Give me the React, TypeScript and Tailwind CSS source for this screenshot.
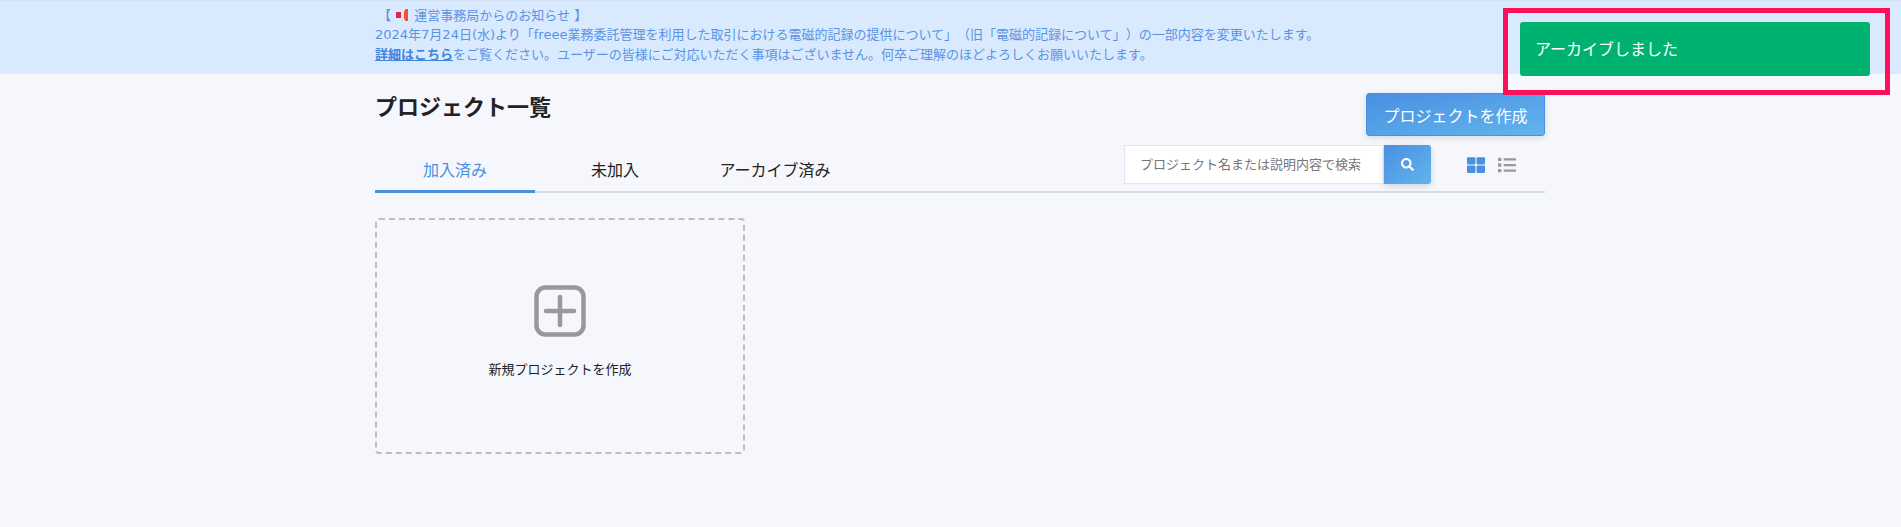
import React from 'react';
import { FaSearch, FaThLarge, FaList } from 'react-icons/fa';

const Megaphone = () => (
  <svg width="15" height="14" viewBox="0 0 15 14" className="inline-block align-[-2px]">
    <rect x="1" y="4" width="5" height="6" fill="#d8284f" />
    <rect x="6" y="4" width="3" height="6" fill="#e4e2e8" />
    <path d="M9 3.5 L10.5 1 L13 1 L13 13 L10.5 13 L9 10.5 Z" fill="#e8553f" />
    <rect x="6" y="10" width="2" height="3" fill="#d9d9de" />
  </svg>
);

const PlusSquare = () => (
  <svg width="52" height="52" viewBox="0 0 52 52" fill="none" stroke="#97999c" strokeWidth="4.5" strokeLinecap="round">
    <rect x="2.5" y="2.5" width="47" height="47" rx="9" />
    <path d="M26 12 V40" />
    <path d="M12 26 H40" />
  </svg>
);

export default function App() {
  const tabs = ['加入済み', '未加入', 'アーカイブ済み'];

  return (
    <div className="relative min-h-[527px] bg-[#f5f7fc] text-[#222] font-['Noto_Sans_CJK_JP','Liberation_Sans',sans-serif] [text-spacing-trim:space-all]">
      {/* Notice */}
      <div className="h-[74px] bg-[#d9eaff] border-t border-[#d3e4f8] pl-[375px] pt-[4.5px] text-[13px] leading-[19.5px] text-[#5b93e3] font-['DejaVu_Sans','Noto_Sans_CJK_JP',sans-serif]">
        <p className="pl-[3px]">【 <Megaphone /> 運営事務局からのお知らせ 】</p>
        <p>2024年7月24日(水)より「freee業務委託管理を利用した取引における電磁的記録の提供について」（旧「電磁的記録について」）の一部内容を変更いたします。</p>
        <p>
          <a className="font-bold underline text-[#3f86e0]">詳細はこちら</a>をご覧ください。ユーザーの皆様にご対応いただく事項はございません。何卒ご理解のほどよろしくお願いいたします。
        </p>
      </div>

      <main className="ml-[375px] w-[1170px]">
        <div className="flex items-start justify-between pt-[19px]">
          <h1 className="text-[22px] leading-[30px] font-bold mt-[-3px]">プロジェクト一覧</h1>
          <button className="w-[179px] h-[43px] rounded-[3px] border border-[#4a90e2] bg-gradient-to-br from-[#4a90e2] to-[#62b4ec] text-white text-[16px] shadow-[0_2px_6px_rgba(0,0,0,0.12)]">
            プロジェクトを作成
          </button>
        </div>

        <div className="flex items-end justify-between h-[57px] border-b-2 border-[#d8dbe2]">
          <div className="flex">
            {tabs.map((tab, i) => (
              <div
                key={tab}
                className={`w-[160px] h-[40px] -mb-[2px] text-center text-[16px] leading-[32px] ${
                  i === 0 ? 'border-b-[3px] border-[#4a90e2] text-[#4a90e2]' : 'text-[#222]'
                }`}
              >
                {tab}
              </div>
            ))}
          </div>
          <div className="flex items-center self-start mt-[9px] mr-[29px]">
            <div className="w-[260px] h-[39px] bg-white border border-[#e2e6ea] pl-[15px] text-[13px] leading-[36px] text-[#777]">
              プロジェクト名または説明内容で検索
            </div>
            <button className="w-[47px] h-[39px] flex items-center justify-center rounded-r-[3px] bg-gradient-to-br from-[#4a90e2] to-[#62b4ec] text-white shadow-[0_2px_6px_rgba(0,0,0,0.15)]">
              <FaSearch size={13} />
            </button>
            <FaThLarge size={18} className="ml-[36px] text-[#4a90e2]" />
            <FaList size={18} className="ml-[13px] text-[#97999c]" />
          </div>
        </div>

        <div className="mt-[25px] w-[370px] h-[236px] rounded-[4px] border-2 border-dashed border-[#bdbec0] flex flex-col items-center pt-[65px]">
          <PlusSquare />
          <p className="mt-[22px] text-[13px] leading-[20px]">新規プロジェクトを作成</p>
        </div>
      </main>

      {/* Toast */}
      <div className="absolute left-[1520px] top-[22px] w-[350px] h-[54px] rounded-[3px] bg-[#00b26f] pl-[15px] text-white text-[16px] leading-[52px]">
        アーカイブしました
      </div>
      {/* Highlight frame */}
      <div className="absolute left-[1503px] top-[8px] w-[387px] h-[87px] border-[5px] border-[#ff0f5a]" />
    </div>
  );
}
